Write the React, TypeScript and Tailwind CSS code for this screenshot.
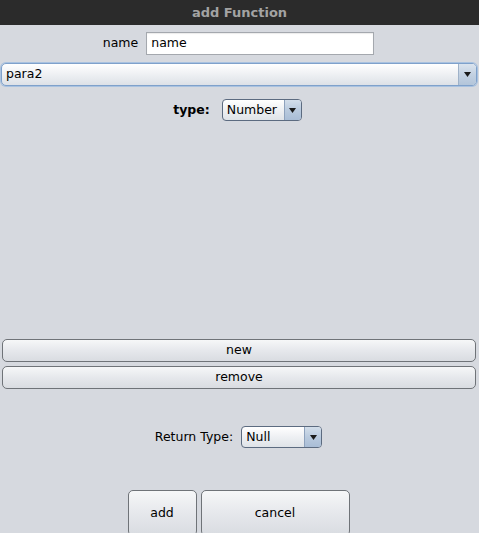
import React from 'react';

const Arrow = () => (
  <svg width="7" height="5" viewBox="0 0 7 5">
    <path d="M0 0 H7 L3.5 5 Z" fill="#1a1a1a" />
  </svg>
);

const SmallCombo = ({ value, width }: { value: string; width: string }) => (
  <div
    className={`${width} h-[22px] flex rounded-[4px] border border-[#5c6b80] overflow-hidden bg-gradient-to-b from-[#ffffff] via-[#eef0f3] to-[#dfe3e8]`}
  >
    <div className="flex-1 flex items-center pl-[4px] text-[12.5px] text-black">{value}</div>
    <div className="w-[17px] flex items-center justify-center border-l border-[#8ea2bd] bg-gradient-to-b from-[#d3deea] via-[#b9cade] to-[#a9bdd6]">
      <Arrow />
    </div>
  </div>
);

const Button = ({ label, className }: { label: string; className: string }) => (
  <div
    className={`${className} flex items-center justify-center rounded-[5px] border border-[#6f7378] bg-gradient-to-b from-[#f6f7f8] via-[#e6e8ec] to-[#d9dce1] text-[12.5px] text-black`}
  >
    {label}
  </div>
);

export default function App() {
  return (
    <div
      className="w-[479px] h-[533px] overflow-hidden flex flex-col bg-[#d6d9df]"
      style={{ fontFamily: '"DejaVu Sans", sans-serif' }}
    >
      {/* title bar */}
      <div className="h-[25px] shrink-0 bg-[#2b2b2b] flex items-center justify-center text-[13px] font-bold text-[#a3a3a3]">
        add Function
      </div>

      {/* name */}
      <div className="mt-[7px] h-[23px] shrink-0 flex items-center justify-center gap-[8px] pr-[2px]">
        <span className="text-[12.5px] text-black">name</span>
        <div className="w-[228px] h-[23px] bg-white border border-[#a4a8ae] shadow-[inset_0_1px_1px_rgba(0,0,0,0.08)] flex items-center pl-[4px] text-[12.5px] text-black">
          name
        </div>
      </div>

      {/* parameter combo */}
      <div className="mt-[8px] ml-[1px] mr-[2px] h-[23px] shrink-0 flex rounded-[5px] border border-[#7fa1cb] shadow-[0_0_0_1px_#a9c2e0] overflow-hidden bg-gradient-to-b from-[#ffffff] via-[#eef0f3] to-[#dde1e7]">
        <div className="flex-1 flex items-center pl-[4px] text-[12.5px] text-black">para2</div>
        <div className="w-[18px] flex items-center justify-center border-l border-[#9fb2c9] bg-gradient-to-b from-[#dbe4ee] via-[#c3d1e2] to-[#b3c5da]">
          <Arrow />
        </div>
      </div>

      {/* type */}
      <div className="mt-[13px] h-[22px] shrink-0 flex items-center justify-center gap-[12px] pr-[4px]">
        <span className="text-[12.5px] font-bold text-black">type:</span>
        <SmallCombo value="Number" width="w-[80px]" />
      </div>

      <div className="h-[218px] shrink-0" />

      <Button label="new" className="ml-[2px] mr-[3px] h-[23px] shrink-0" />
      <Button label="remove" className="mt-[4px] ml-[2px] mr-[3px] h-[23px] shrink-0" />

      {/* return type */}
      <div className="mt-[37px] h-[22px] shrink-0 flex items-center justify-center gap-[8px] pr-[2px]">
        <span className="text-[12.5px] text-black">Return Type:</span>
        <SmallCombo value="Null" width="w-[81px]" />
      </div>

      {/* actions */}
      <div className="mt-[42px] shrink-0 flex justify-center gap-[4px] pr-[2px]">
        <Button label="add" className="w-[69px] h-[46px]" />
        <Button label="cancel" className="w-[149px] h-[46px]" />
      </div>
    </div>
  );
}
